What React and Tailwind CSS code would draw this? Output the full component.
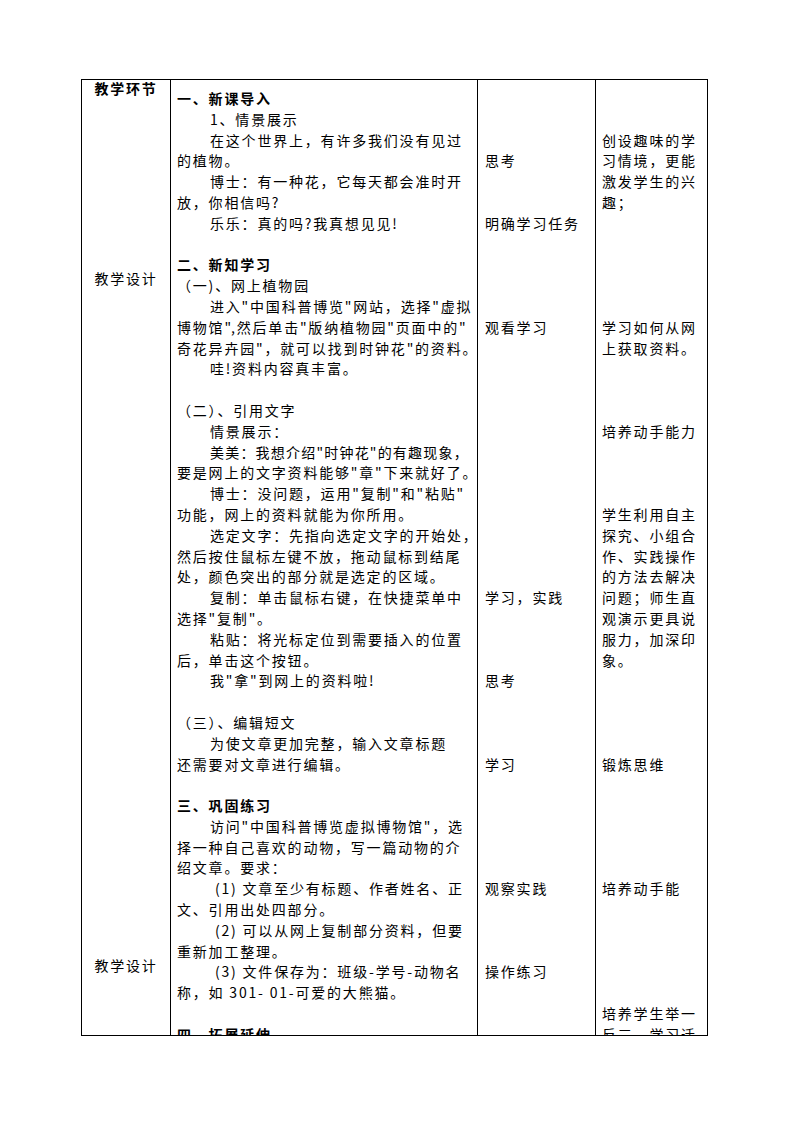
import React from "react";

const Q = '"';

const c2 = [
  { t: "一、新课导入", b: true },
  { t: "1、情景展示", i: true },
  { t: "在这个世界上，有许多我们没有见过", i: true },
  { t: "的植物。" },
  { t: "博士：有一种花，它每天都会准时开", i: true },
  { t: "放，你相信吗?" },
  { t: "乐乐：真的吗?我真想见见!", i: true },
  { t: "" },
  { t: "二、新知学习", b: true },
  { t: "（一)、网上植物园" },
  { t: `进入${Q}中国科普博览${Q}网站，选择${Q}虚拟`, i: true },
  { t: `博物馆${Q},然后单击${Q}版纳植物园${Q}页面中的${Q}` },
  { t: `奇花异卉园${Q}，就可以找到时钟花${Q}的资料。` },
  { t: "哇!资料内容真丰富。", i: true },
  { t: "" },
  { t: "（二）、引用文字" },
  { t: "情景展示：", i: true },
  { t: `美美：我想介绍${Q}时钟花${Q}的有趣现象，`, i: true, n: true },
  { t: `要是网上的文字资料能够${Q}章${Q}下来就好了。` },
  { t: `博士：没问题，运用${Q}复制${Q}和${Q}粘贴${Q}`, i: true },
  { t: "功能，网上的资料就能为你所用。" },
  { t: "选定文字：先指向选定文字的开始处，", i: true },
  { t: "然后按住鼠标左键不放，拖动鼠标到结尾" },
  { t: "处，颜色突出的部分就是选定的区域。" },
  { t: "复制：单击鼠标右键，在快捷菜单中", i: true },
  { t: `选择${Q}复制${Q}。` },
  { t: "粘贴：将光标定位到需要插入的位置", i: true },
  { t: "后，单击这个按钮。" },
  { t: `我${Q}拿${Q}到网上的资料啦!`, i: true },
  { t: "" },
  { t: "（三）、编辑短文" },
  { t: "为使文章更加完整，输入文章标题", i: true },
  { t: "还需要对文章进行编辑。" },
  { t: "" },
  { t: "三、巩固练习", b: true },
  { t: `访问${Q}中国科普博览虚拟博物馆${Q}，选`, i: true },
  { t: "择一种自己喜欢的动物，写一篇动物的介" },
  { t: "绍文章。要求：" },
  { t: "(1) 文章至少有标题、作者姓名、正", p: true },
  { t: "文、引用出处四部分。" },
  { t: "(2) 可以从网上复制部分资料，但要", p: true },
  { t: "重新加工整理。" },
  { t: "(3) 文件保存为：班级-学号-动物名", p: true },
  { t: "称，如 301- 01-可爱的大熊猫。" },
  { t: "" },
  { t: "四、拓展延伸", b: true },
];

const c3 = {
  4: "思考",
  7: "明确学习任务",
  12: "观看学习",
  25: "学习，实践",
  29: "思考",
  33: "学习",
  39: "观察实践",
  43: "操作练习",
};

const c4 = {
  3: "创设趣味的学",
  4: "习情境，更能",
  5: "激发学生的兴",
  6: "趣；",
  12: "学习如何从网",
  13: "上获取资料。",
  17: "培养动手能力",
  21: "学生利用自主",
  22: "探究、小组合",
  23: "作、实践操作",
  24: "的方法去解决",
  25: "问题；师生直",
  26: "观演示更具说",
  27: "服力，加深印",
  28: "象。",
  33: "锻炼思维",
  39: "培养动手能",
  45: "培养学生举一",
  46: "反三、学习迁",
};

const N = 46;

function Sparse({ map }) {
  const rows = [];
  for (let n = 1; n <= N; n++) {
    rows.push(
      <div key={n} className="h-[20.8px] whitespace-nowrap">
        {map[n] || ""}
      </div>
    );
  }
  return rows;
}

export default function App() {
  return (
    <div className="w-[794px] h-[1123px] bg-white text-black font-['Noto_Sans_CJK_SC',sans-serif] text-[14px] tracking-[1.8px] leading-[20.8px] pt-[79px] pl-[81px]">
      <div className="flex w-[627px] h-[957px] border border-black overflow-hidden">
        <div className="w-[89px] shrink-0 border-r border-black flex flex-col items-center">
          <div className="font-bold leading-[17px]">教学环节</div>
          <div className="mt-[171px]">教学设计</div>
          <div className="mt-[666px]">教学设计</div>
        </div>
        <div className="w-[307px] shrink-0 border-r border-black pt-[8px] pl-[6px] overflow-hidden">
          {c2.map((l, k) => (
            <div
              key={k}
              className={
                "h-[20.8px] whitespace-nowrap " +
                (l.b ? "font-bold " : "") +
                (l.i ? "pl-[33px] " : "") +
                (l.p ? "pl-[38px] " : "") +
                (l.n ? "tracking-[1.2px] " : "")
              }
            >
              {l.t}
            </div>
          ))}
        </div>
        <div className="w-[118px] shrink-0 border-r border-black pt-[8px] pl-[7px] overflow-hidden">
          <Sparse map={c3} />
        </div>
        <div className="w-[111px] shrink-0 pt-[8px] pl-[6px] overflow-hidden">
          <Sparse map={c4} />
        </div>
      </div>
    </div>
  );
}
